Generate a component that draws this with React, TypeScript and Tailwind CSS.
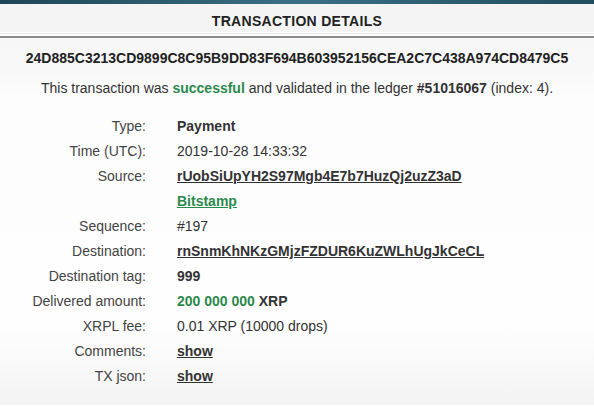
import React from 'react';

const rows: { label: string; value: React.ReactNode }[] = [
  { label: 'Type:', value: <span className="font-bold">Payment</span> },
  { label: 'Time (UTC):', value: '2019-10-28 14:33:32' },
  { label: 'Source:', value: <a className="font-bold underline">rUobSiUpYH2S97Mgb4E7b7HuzQj2uzZ3aD</a> },
  { label: '', value: <a className="font-bold underline text-[#2b8a4b]">Bitstamp</a> },
  { label: 'Sequence:', value: '#197' },
  { label: 'Destination:', value: <a className="font-bold underline">rnSnmKhNKzGMjzFZDUR6KuZWLhUgJkCeCL</a> },
  { label: 'Destination tag:', value: <span className="font-bold">999</span> },
  {
    label: 'Delivered amount:',
    value: (
      <span className="font-bold">
        <span className="text-[#2b8a4b]">200 000 000</span> XRP
      </span>
    ),
  },
  { label: 'XRPL fee:', value: '0.01 XRP (10000 drops)' },
  { label: 'Comments:', value: <a className="font-bold underline">show</a> },
  { label: 'TX json:', value: <a className="font-bold underline">show</a> },
];

export default function App() {
  return (
    <div className="w-[594px] h-[407px] overflow-hidden font-['Liberation_Sans',Arial,sans-serif] text-[#333]">
      <div className="h-[4px] bg-gradient-to-r from-[#1c4655] via-[#3a7085] to-[#1f4d5e]" />
      <div className="h-[28px] bg-[#f4f4f4] flex items-center justify-center">
        <h1 className="text-[14px] font-bold text-[#222] tracking-[0.3px] pt-[6px]">TRANSACTION DETAILS</h1>
      </div>
      <div className="h-[2px] bg-[#e6e6e6] border-t border-white" />
      <div className="h-[2px] bg-white" />
      <div className="h-[2px] bg-[#8c8c8c]" />
      <div className="h-[367px] bg-[linear-gradient(to_bottom,#f7f7f7_0px,#f8f8f8_30px,#fdfdfd_60px,#fefefe_290px,#f3f3f3_367px)]">
        <div className="pt-[10px] text-center text-[14px] font-bold leading-[20px] text-[#222]">
          24D885C3213CD9899C8C95B9DD83F694B603952156CEA2C7C438A974CD8479C5
        </div>
        <p className="mt-[10px] text-center text-[14px] leading-[20px]">
          This transaction was <span className="font-bold text-[#2b8a4b]">successful</span> and validated in the ledger{' '}
          <span className="font-bold">#51016067</span> (index: 4).
        </p>
        <div className="mt-[16px] grid grid-cols-[146px_1fr] gap-x-[31px] text-[14px]">
          {rows.map((r, i) => (
            <React.Fragment key={i}>
              <div className="text-right leading-[25px] text-[#444]">{r.label}</div>
              <div className="leading-[25px] text-[#333]">{r.value}</div>
            </React.Fragment>
          ))}
        </div>
      </div>
    </div>
  );
}
